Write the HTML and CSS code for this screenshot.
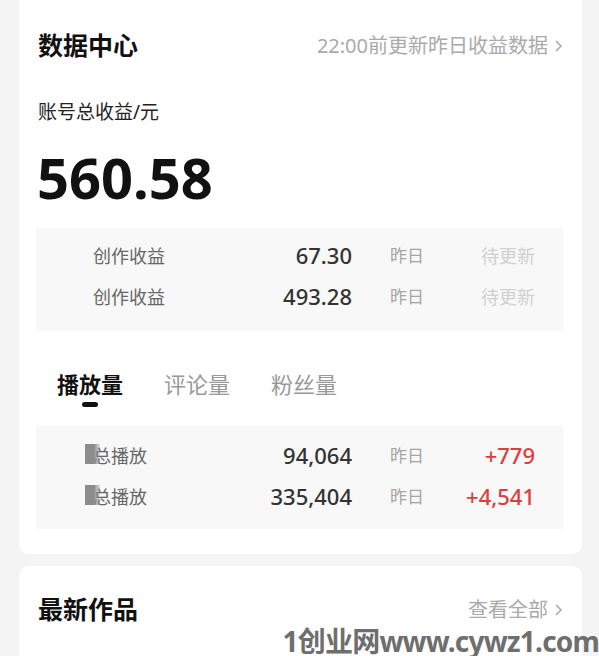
FILE: index.html
```html
<!DOCTYPE html>
<html>
<head>
    <title>数据中心</title>
    <link rel="stylesheet" href="styles.css">
</head>
<body>
    <div class="page">
        <div class="card">
            <div class="card-head">
                <span class="card-title">数据中心</span>
                <span class="card-link">22:00前更新昨日收益数据
                    <svg class="chev" width="9" height="14" viewBox="0 0 9 14"><polyline points="2,2 7,7 2,12" fill="none" stroke="#aaa" stroke-width="1.6"/></svg>
                </span>
            </div>

            <div class="total-label">账号总收益/元</div>
            <div class="total-value">560.58</div>

            <div class="stat-box">
                <div class="stat-row">
                    <span class="stat-name">创作收益</span>
                    <span class="stat-num">67.30</span>
                    <span class="stat-day">昨日</span>
                    <span class="stat-diff pending">待更新</span>
                </div>
                <div class="stat-row">
                    <span class="stat-name">创作收益</span>
                    <span class="stat-num">493.28</span>
                    <span class="stat-day">昨日</span>
                    <span class="stat-diff pending">待更新</span>
                </div>
            </div>

            <div class="tabs">
                <div class="tab active">播放量<span class="tab-bar"></span></div>
                <div class="tab">评论量</div>
                <div class="tab">粉丝量</div>
            </div>

            <div class="stat-box">
                <div class="stat-row">
                    <span class="stat-name masked">总播放</span>
                    <span class="stat-num">94,064</span>
                    <span class="stat-day">昨日</span>
                    <span class="stat-diff up">+779</span>
                </div>
                <div class="stat-row">
                    <span class="stat-name masked">总播放</span>
                    <span class="stat-num">335,404</span>
                    <span class="stat-day">昨日</span>
                    <span class="stat-diff up">+4,541</span>
                </div>
            </div>
        </div>

        <div class="card card-works">
            <div class="card-head">
                <span class="card-title">最新作品</span>
                <span class="card-link">查看全部
                    <svg class="chev" width="9" height="14" viewBox="0 0 9 14"><polyline points="2,2 7,7 2,12" fill="none" stroke="#aaa" stroke-width="1.6"/></svg>
                </span>
            </div>
        </div>
    </div>

    <div class="watermark">1创业网www.cywz1.com</div>
</body>
</html>
```

FILE: styles.css
```css
body {
    margin: 0;
    background-color: #f4f4f4;
    font-family: "Noto Sans", "Noto Sans CJK SC", sans-serif;
    color: #222;
    height: 656px;
    overflow: hidden;
    position: relative;
}

.page {
    padding: 0 17px 0 19px;
}

.card {
    background-color: #fff;
    border-radius: 0 0 10px 10px;
    padding: 0 19px 25px 17px;
}

.card-head {
    display: flex;
    justify-content: space-between;
    align-items: center;
    padding: 28px 0 0 2px;
    height: 34px;
}

.card-title {
    font-size: 25px;
    font-weight: 700;
    color: #111;
    line-height: 34px;
}

.card-link {
    display: flex;
    align-items: center;
    gap: 6px;
    font-size: 20px;
    color: #aaa;
    line-height: 28px;
    margin-top: 2px;
}

.total-label {
    margin: 36px 0 0 2px;
    font-size: 19px;
    line-height: 28px;
    color: #222;
}

.total-value {
    margin: 20px 0 0 1px;
    font-size: 56px;
    font-weight: 700;
    line-height: 62px;
    color: #111;
}

.stat-box {
    background-color: #f8f8f8;
    margin-top: 20px;
    padding: 6px 28px 15px 57px;
}

.stat-row {
    display: flex;
    align-items: center;
    height: 41px;
}

.stat-name {
    position: relative;
    width: 150px;
    font-size: 18px;
    color: #666;
}

.stat-name.masked::before {
    content: "";
    position: absolute;
    left: -8px;
    top: 2px;
    width: 15px;
    height: 20px;
    background: linear-gradient(to right, #8c8c8c 60%, rgba(140, 140, 140, 0.2));
}

.stat-num {
    width: 109px;
    text-align: right;
    font-size: 22px;
    font-weight: 500;
    color: #333;
}

.stat-day {
    width: 60px;
    margin-left: 38px;
    font-size: 17px;
    color: #a5a5a5;
}

.stat-diff {
    flex: 1;
    text-align: right;
    font-size: 22px;
}

.stat-diff.pending {
    font-size: 18px;
    color: #d0d0d0;
}

.stat-diff.up {
    color: #e03c3c;
    font-weight: 500;
}

.tabs {
    display: flex;
    gap: 41px;
    margin: 38px 0 0 21px;
}

.tab {
    position: relative;
    font-size: 22px;
    line-height: 30px;
    color: #999;
    padding-bottom: 8px;
}

.tab.active {
    color: #111;
    font-weight: 700;
}

.tab-bar {
    position: absolute;
    left: 25px;
    top: 33px;
    width: 16px;
    height: 5px;
    border-radius: 3px;
    background-color: #111;
}

.tabs + .stat-box {
    margin-top: 19px;
    padding-top: 8px;
    padding-bottom: 13px;
}

.card-works {
    margin-top: 12px;
    border-radius: 10px 10px 0 0;
    padding-bottom: 40px;
}

.card-works .card-head {
    padding-top: 26px;
}

.watermark {
    position: absolute;
    right: 0;
    bottom: 0;
    font-size: 28px;
    font-weight: 700;
    line-height: 30px;
    letter-spacing: -0.8px;
    color: #6e6e6e;
    white-space: nowrap;
}
```
